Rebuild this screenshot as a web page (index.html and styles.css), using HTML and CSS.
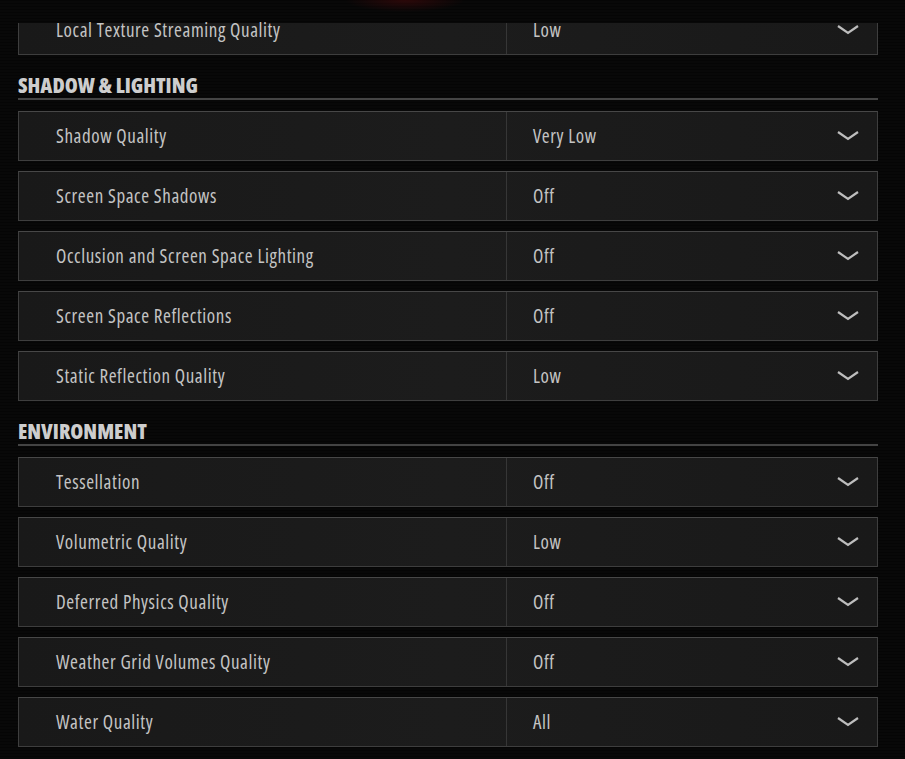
FILE: index.html
```html
<!DOCTYPE html>
<html>
<head>
<meta charset="utf-8" />
<title>Graphics Settings</title>
<link rel="stylesheet" href="styles.css">
</head>
<body>
<div class="page">
	<div class="row cut">
		<span class="label">Local Texture Streaming Quality</span>
		<span class="value">Low</span>
		<span class="arrow"><svg width="22" height="10" viewBox="0 0 22 10"><path d="M1 1 L11 8 L21 1" /></svg></span>
	</div>

	<h2 class="head">SHADOW &amp; LIGHTING</h2>
	<div class="list">
		<div class="row">
			<span class="label">Shadow Quality</span>
			<span class="value">Very Low</span>
			<span class="arrow"><svg width="22" height="10" viewBox="0 0 22 10"><path d="M1 1 L11 8 L21 1" /></svg></span>
		</div>
		<div class="row">
			<span class="label">Screen Space Shadows</span>
			<span class="value">Off</span>
			<span class="arrow"><svg width="22" height="10" viewBox="0 0 22 10"><path d="M1 1 L11 8 L21 1" /></svg></span>
		</div>
		<div class="row">
			<span class="label">Occlusion and Screen Space Lighting</span>
			<span class="value">Off</span>
			<span class="arrow"><svg width="22" height="10" viewBox="0 0 22 10"><path d="M1 1 L11 8 L21 1" /></svg></span>
		</div>
		<div class="row">
			<span class="label">Screen Space Reflections</span>
			<span class="value">Off</span>
			<span class="arrow"><svg width="22" height="10" viewBox="0 0 22 10"><path d="M1 1 L11 8 L21 1" /></svg></span>
		</div>
		<div class="row">
			<span class="label">Static Reflection Quality</span>
			<span class="value">Low</span>
			<span class="arrow"><svg width="22" height="10" viewBox="0 0 22 10"><path d="M1 1 L11 8 L21 1" /></svg></span>
		</div>
	</div>

	<h2 class="head">ENVIRONMENT</h2>
	<div class="list">
		<div class="row">
			<span class="label">Tessellation</span>
			<span class="value">Off</span>
			<span class="arrow"><svg width="22" height="10" viewBox="0 0 22 10"><path d="M1 1 L11 8 L21 1" /></svg></span>
		</div>
		<div class="row">
			<span class="label">Volumetric Quality</span>
			<span class="value">Low</span>
			<span class="arrow"><svg width="22" height="10" viewBox="0 0 22 10"><path d="M1 1 L11 8 L21 1" /></svg></span>
		</div>
		<div class="row">
			<span class="label">Deferred Physics Quality</span>
			<span class="value">Off</span>
			<span class="arrow"><svg width="22" height="10" viewBox="0 0 22 10"><path d="M1 1 L11 8 L21 1" /></svg></span>
		</div>
		<div class="row">
			<span class="label">Weather Grid Volumes Quality</span>
			<span class="value">Off</span>
			<span class="arrow"><svg width="22" height="10" viewBox="0 0 22 10"><path d="M1 1 L11 8 L21 1" /></svg></span>
		</div>
		<div class="row">
			<span class="label">Water Quality</span>
			<span class="value">All</span>
			<span class="arrow"><svg width="22" height="10" viewBox="0 0 22 10"><path d="M1 1 L11 8 L21 1" /></svg></span>
		</div>
	</div>
</div>
</body>
</html>
```

FILE: styles.css
```css
*{ margin:0; padding:0; box-sizing:border-box;}
html,body{ height:100%;}
body{
	background:#070707;
	background-image:radial-gradient(ellipse 60px 12px at 405px 0, rgba(90,10,12,0.45), transparent),
		repeating-linear-gradient(0deg, #080808 0, #080808 2px, #050505 2px, #050505 3px);
	font-family:"Open Sans", "DejaVu Sans Condensed", sans-serif;
	font-stretch:80%;
	color:#c4c4c4;
	overflow:hidden;
}
.page{ width:860px; margin-left:18px; padding-top:23px;}
.head{
	margin-top:20px;
	height:25px;
	font-size:21px;
	line-height:21px;
	font-weight:800;
	font-stretch:75%;
	color:#cdcdcd;
	border-bottom:2px solid #444;
}
.list{ display:flex; flex-direction:column; gap:10px; margin-top:11px;}
.row{
	height:50px;
	display:flex;
	align-items:center;
	background:linear-gradient(90deg, #191919, #1c1c1c 50%, #191919);
	border:1px solid #3e3e3e;
	border-top-color:#474747;
}
.row.cut{ height:32px; border-top:0; padding-bottom:18px;}
.row.cut .label{ margin-bottom:-18px; padding-bottom:18px;}
.label{ width:488px; padding-left:37px; font-size:19px; letter-spacing:0.6px; color:#c4c4c4; align-self:stretch; display:flex; align-items:center; border-right:1px solid #363636;}
.value{ flex:1; padding-left:26px; font-size:19px; letter-spacing:0.6px; color:#c4c4c4;}
.arrow{ width:22px; height:10px; margin-right:18px; display:flex;}
.arrow path{ fill:none; stroke:#bdbdbd; stroke-width:2.2; stroke-linejoin:miter;}
```
